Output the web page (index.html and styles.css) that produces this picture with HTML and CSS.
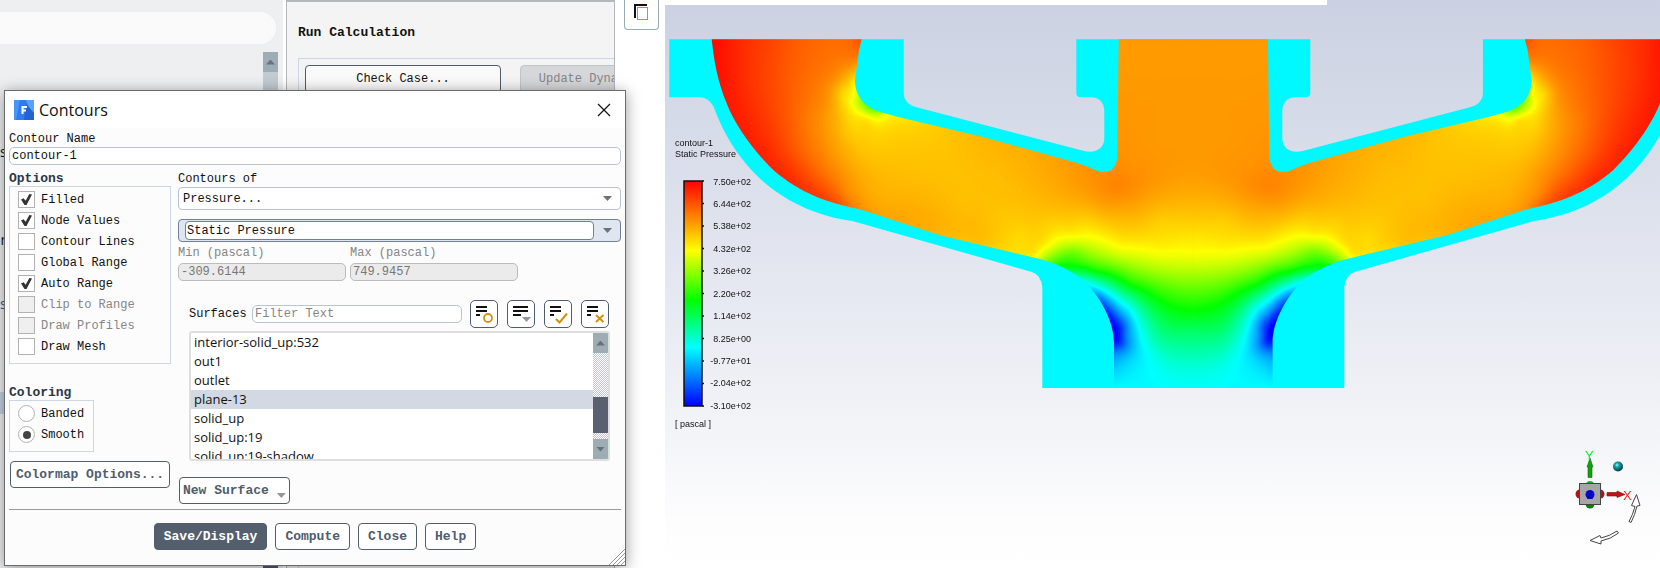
FILE: index.html
```
<!DOCTYPE html>
<html lang="en">
<head>
<meta charset="utf-8">
<title>Contours</title>
<link rel="stylesheet" href="styles.css">
</head>
<body>
<div class="app">
  <aside class="outline">
    <div class="outline-search"></div>
    <div class="outline-scroll">
      <div class="scroll-button"><span class="arrow-up"></span></div>
      <div class="outline-thumb"></div>
    </div>
    <div class="outline-items">
      <span class="outline-item">s</span>
      <span class="outline-item outline-item-clipped">or</span>
      <span class="outline-item">s</span>
      <span class="outline-item outline-item-selected"></span>
    </div>
  </aside>

  <section class="task">
    <h2 class="task-title">Run Calculation</h2>
    <div class="task-group">
      <button class="task-button" type="button">Check Case...</button>
      <button class="task-button task-button-clipped" type="button" disabled>Update Dynamic Mesh...</button>
    </div>
  </section>

  <main class="graphics">
    <div class="side-tools">
      <button class="copy-button" type="button" aria-label="Copy view">
        <svg width="15" height="17" viewBox="0 0 15 17"><path d="M1 14V1h12" fill="none" stroke="#111" stroke-width="2"/><rect x="3.5" y="3.5" width="10" height="12" fill="#fff" stroke="#d0920f"/></svg>
      </button>
    </div>
    <div class="viewport">
      <div class="viewport-strip"></div>
      <canvas class="plot" id="plot" width="995" height="560"></canvas>
      <svg class="plot" viewBox="665 0 995 560">
        <defs>
          <linearGradient id="rainbow" x1="0" y1="0" x2="0" y2="1">
            <stop offset="0" stop-color="#f00"/><stop offset=".31" stop-color="#ff0"/>
            <stop offset=".53" stop-color="#0f0"/><stop offset=".74" stop-color="#0ff"/>
            <stop offset="1" stop-color="#00f"/>
          </linearGradient>
          <radialGradient id="ball" cx=".4" cy=".35" r=".6">
            <stop offset="0" stop-color="#8ff"/><stop offset=".35" stop-color="#1aa3a3"/><stop offset="1" stop-color="#045"/>
          </radialGradient>
        </defs>
        <g class="legend">
          <text x="675" y="146">contour-1</text>
          <text x="675" y="157">Static Pressure</text>
          <rect x="684" y="181" width="18" height="225" fill="url(#rainbow)" stroke="#111" stroke-width="1.5"/>
          <path d="M702 181h2M702 203.500h2M702 226h2M702 248.500h2M702 271h2M702 293.500h2M702 316h2M702 338.500h2M702 361h2M702 383.500h2M702 406h2" stroke="#111" stroke-width="1.5"/>
          <g text-anchor="end">
            <text x="751" y="185">7.50e+02</text><text x="751" y="207">6.44e+02</text>
            <text x="751" y="229">5.38e+02</text><text x="751" y="252">4.32e+02</text>
            <text x="751" y="274">3.26e+02</text><text x="751" y="297">2.20e+02</text>
            <text x="751" y="319">1.14e+02</text><text x="751" y="342">8.25e+00</text>
            <text x="751" y="364">-9.77e+01</text><text x="751" y="386">-2.04e+02</text>
            <text x="751" y="409">-3.10e+02</text>
          </g>
          <text x="675" y="427">[ pascal ]</text>
        </g>
        <g class="triad">
          <circle cx="1590" cy="485" r="4" fill="#1fae1f"/><circle cx="1590" cy="504" r="4.500" fill="#0c7c0c"/>
          <circle cx="1580" cy="494" r="4.500" fill="#b01515"/><circle cx="1600" cy="494" r="4.500" fill="#b01515"/>
          <rect x="1579.500" y="483.500" width="21" height="21" fill="#a6a6a6" stroke="#444"/>
          <path d="M1588 477.500V467h-1l3-9 3 9h-1v10.500z" fill="#12a012" stroke="#0a6b0a" stroke-width=".6"/>
          <path d="M1607 492.500h10v-1.500l8 3.500-8 3v-1.500h-10z" fill="#c01414" stroke="#7d0a0a" stroke-width=".6"/>
          <circle cx="1590" cy="494.500" r="4.500" fill="#0505d8"/>
          <text x="1585" y="460" class="axis axis-y">Y</text>
          <text x="1623" y="500" class="axis axis-x">X</text>
          <text x="1587" y="499" class="axis axis-z">Z</text>
          <circle cx="1618" cy="466.500" r="5" fill="url(#ball)"/>
          <g fill="#fff" stroke="#444">
            <path d="M1629 521.500q4-7 6-15l-3.500-1 5-11 3.500 11-3 .5q-2 9-6 16.500z"/>
            <path d="M1617 531q-7 5-16 7l-1-2.500-10 5 11 3.500v-3q10-2 17.500-8z"/>
          </g>
        </g>
      </svg>
    </div>
    <div class="view-tools">
      <i class="tool tool-active"></i><i class="tool"></i><i class="tool"></i><i class="tool"></i><i class="tool tool-last"></i>
      <i class="tool"></i><i class="tool"></i><i class="tool"></i><i class="tool tool-last"></i>
      <i class="tool tool-active"></i><i class="tool tool-last"></i><i class="tool tool-last"></i><i class="tool tool-last"></i><i class="tool tool-last"></i><i class="tool tool-last"></i>
      <i class="tool tool-active"></i><i class="tool tool-after"></i>
    </div>
  </main>

  <form class="dialog" role="dialog" aria-labelledby="dialog-title">
    <header class="titlebar">
      <svg width="20" height="20" viewBox="0 0 20 20" aria-hidden="true"><path d="M0 0h20v20H0z" fill="#2f7cf0"/><path d="M0 0h6L2 20H0z" fill="#4a93f7"/><path d="M12 0h8v20z" fill="#55a2f8"/><path d="M12 4l8 9v7H10z" fill="#2263d0"/><path d="M8.500 14V7H13M8.500 10.500h3.500" fill="none" stroke="#fff" stroke-width="2"/></svg>
      <h1 class="dialog-title" id="dialog-title">Contours</h1>
      <button class="close" type="button" aria-label="Close window"><svg width="14" height="14" viewBox="0 0 14 14"><path d="M1 1l12 12M13 1L1 13" stroke="#111" stroke-width="1.200"/></svg></button>
    </header>
    <div class="content">
      <label class="label" for="name">Contour Name</label>
      <input class="field" id="name" type="text" value="contour-1">
      <div class="columns">
        <div class="left">
          <div class="heading" id="options-title">Options</div>
          <div class="group" role="group" aria-labelledby="options-title">
            <label class="choice"><input type="checkbox" checked>Filled</label>
            <label class="choice"><input type="checkbox" checked>Node Values</label>
            <label class="choice"><input type="checkbox">Contour Lines</label>
            <label class="choice"><input type="checkbox">Global Range</label>
            <label class="choice"><input type="checkbox" checked>Auto Range</label>
            <label class="choice choice-off"><input type="checkbox" disabled>Clip to Range</label>
            <label class="choice choice-off"><input type="checkbox" disabled>Draw Profiles</label>
            <label class="choice"><input type="checkbox">Draw Mesh</label>
          </div>
          <div class="heading heading-coloring" id="coloring-title">Coloring</div>
          <div class="group group-coloring" role="radiogroup" aria-labelledby="coloring-title">
            <label class="choice"><input type="radio" name="coloring">Banded</label>
            <label class="choice"><input type="radio" name="coloring" checked>Smooth</label>
          </div>
          <button class="button button-colormap" type="button">Colormap Options...</button>
        </div>
        <div class="right">
          <label class="label" for="quantity">Contours of</label>
          <div class="combo"><select id="quantity"><option>Pressure...</option></select><span class="arrow-down"></span></div>
          <div class="combo combo-focus"><select aria-label="Component"><option>Static Pressure</option></select><span class="arrow-down"></span></div>
          <div class="limits">
            <div class="limit"><label class="label" for="min">Min (pascal)</label><input class="field" id="min" type="text" value="-309.6144" disabled></div>
            <div class="limit"><label class="label" for="max">Max (pascal)</label><input class="field" id="max" type="text" value="749.9457" disabled></div>
          </div>
          <div class="surfaces">
            <div class="surface-tools">
              <label for="filter">Surfaces</label>
              <input class="field field-filter" id="filter" type="text" placeholder="Filter Text">
              <button class="icon-button" type="button" aria-label="Match"><svg width="26" height="26" viewBox="0 0 26 26"><path d="M5 6h11M5 10h11M5 14h4" stroke="#111" stroke-width="2"/><circle cx="17" cy="17" r="4" fill="none" stroke="#d0920f" stroke-width="1.800"/></svg></button>
              <button class="icon-button" type="button" aria-label="Group"><svg width="26" height="26" viewBox="0 0 26 26"><path d="M5 6h15M5 10h15M5 14h8" stroke="#111" stroke-width="2"/><path d="M14 16h9l-4.500 5z" fill="#9298a2"/></svg></button>
              <button class="icon-button" type="button" aria-label="Select all"><svg width="26" height="26" viewBox="0 0 26 26"><path d="M5 6h11M5 10h11M5 14h4" stroke="#111" stroke-width="2"/><path d="M11 18l3.500 3.500 7.500-9" fill="none" stroke="#d0920f" stroke-width="2"/></svg></button>
              <button class="icon-button" type="button" aria-label="Deselect all"><svg width="26" height="26" viewBox="0 0 26 26"><path d="M5 6h11M5 10h11M5 14h4" stroke="#111" stroke-width="2"/><path d="M14 14l7.500 7M21.500 14L14 21" fill="none" stroke="#d0920f" stroke-width="2"/></svg></button>
            </div>
            <div class="list">
              <ul class="list-items" role="listbox" aria-label="Surfaces">
                <li role="option">interior-solid_up:532</li>
                <li role="option">out1</li>
                <li role="option">outlet</li>
                <li role="option" aria-selected="true" class="selected">plane-13</li>
                <li role="option">solid_up</li>
                <li role="option">solid_up:19</li>
                <li role="option">solid_up:19-shadow</li>
              </ul>
              <div class="list-scroll">
                <div class="scroll-button"><span class="arrow-up"></span></div>
                <div class="list-track"><div class="list-thumb"></div></div>
                <div class="scroll-button"><span class="arrow-down"></span></div>
              </div>
            </div>
          </div>
          <button class="button button-surface" type="button">New Surface<span class="arrow-down"></span></button>
        </div>
      </div>
      <footer class="actions">
        <button class="button button-primary" type="submit">Save/Display</button>
        <button class="button" type="button">Compute</button>
        <button class="button" type="button">Close</button>
        <button class="button" type="button">Help</button>
      </footer>
    </div>
    <svg class="grip" width="16" height="16" viewBox="0 0 16 16" aria-hidden="true"><path d="M0 16L16 0M4 16L16 4M8 16l8-8M12 16l4-4" stroke="#999"/></svg>
  </form>
</div>
<script src="plot.js"></script>
</body>
</html>
```
FILE: styles.css
```
* { box-sizing: border-box; }
body { margin: 0; background: #fff; }
body, button, input, select { font: 12px/16px "Liberation Mono", monospace; color: #111; }
button, input, select { margin: 0; }

.app { position: relative; display: grid; grid-template-columns: 283px 329px 1fr; column-gap: 3px; min-height: 100vh; overflow: hidden; }

/* outline tree */
.outline { position: relative; background: #edeff1; padding-top: 12px; }
.outline-search { height: 32px; margin-right: 7px; background: #fafafa; border-radius: 0 16px 16px 0; }
.outline-scroll { position: absolute; top: 52px; right: 5px; bottom: 0; width: 15px; display: flex; flex-direction: column; background: #c2cbd2; }
.outline-thumb { margin-top: auto; height: 20px; background: #4f5767; }
.outline-items { display: grid; grid-auto-rows: 22px; row-gap: 66px; margin-top: 97px; width: 20px; font: 14px/22px "Open Sans", sans-serif; }
.outline-items .outline-item:nth-child(3) { margin-top: -24px; color: #1559a8; }
.outline-item-clipped { text-indent: -8px; }
.outline-item-selected { background: #c3d1e0; height: 22px; margin-top: -13px; }
.scroll-button { display: flex; flex: none; align-items: center; justify-content: center; height: 20px; background: #9dadb5; }
.arrow-up, .arrow-down { flex: none; width: 9px; height: 5px; background: #687180; }
.arrow-up { clip-path: polygon(50% 0, 100% 100%, 0 100%); }
.arrow-down { clip-path: polygon(0 0, 100% 0, 50% 100%); }

/* task page */
.task { border: 1px solid #b5b8bb; border-top-width: 2px; background: #f4f4f4; padding-left: 11px; overflow: hidden; }
.task-title { margin: 22px 0 16px; font: bold 13px/18px "Liberation Mono", monospace; }
.task-group { display: flex; gap: 19px; border: 1px solid #cdd5e5; border-right: 0; padding: 6px 0 0 6px; height: 520px; }
.task-button { flex: none; width: 196px; height: 28px; border: 1px solid #4f5b6b; border-radius: 4px; background: #fafafa; }
.task-button-clipped { border-color: #c4c4c6; background: #d6d7da; color: #858585; }

/* graphics window */
.graphics { display: grid; grid-template: 1fr auto / 47px 1fr; min-width: 0; }
.side-tools { padding-left: 6px; }
.copy-button { width: 35px; height: 30px; display: flex; justify-content: center; align-items: center; padding: 0 0 5px; border: 1px solid #9aaab8; border-top: 0; border-radius: 0 0 4px 4px; background: #fff; }
.viewport { position: relative; display: grid; align-items: start; min-width: 0; background: linear-gradient(#cbd1e2, #e5e8f1 50%, #f4f5f8 77%, #fdfdfe 91%, #fff); }
.viewport-strip { position: absolute; top: 0; left: 0; width: 67%; height: 5px; max-width: 662px; background: #fff; }
.plot { grid-area: 1 / 1; display: block; width: 100%; height: auto; }
.legend { font: 9px "Liberation Sans", sans-serif; fill: #111; }
.axis { font: 13px "Liberation Sans", sans-serif; }
.axis-x { fill: #f22; }
.axis-y { fill: #1e2; }
.axis-z { fill: #00a; font-size: 10px; }
.view-tools { grid-column: 1 / -1; display: flex; align-items: flex-end; gap: 8px; height: 5px; padding-left: 17px; }
.tool { width: 32px; height: 2px; border-radius: 2px 2px 0 0; background: #9baab4; }
.tool-active { width: 39px; height: 3px; }
.tool-last { margin-right: 18px; }
.tool-after { margin-left: 18px; }

/* dialog window */
.dialog { position: absolute; top: 90px; left: 4px; width: 622px; border: 1px solid #6b6b6b; background: #fcfcfc; box-shadow: 0 2px 14px rgba(0, 0, 0, .4); }
.titlebar { display: flex; align-items: center; gap: 5px; height: 37px; padding: 0 14px 0 9px; background: #fff; }
.dialog-title { margin: 0; font: 16px/20px "Open Sans", sans-serif; }
.close { display: flex; margin-left: auto; padding: 0; border: 0; background: none; }
.content { padding: 3px 4px 15px; }
.label { display: block; height: 16px; white-space: nowrap; }
.field { display: block; width: 100%; height: 18px; padding: 0 2px; border: 1px solid #b8c4d3; border-radius: 5px; background: #fff; }
.field::placeholder { color: #858585; opacity: 1; }
.field:disabled { border-color: #bcbcbc; background: #ebebeb; color: #777; }
.columns { display: grid; grid-template-columns: 162px 1fr; column-gap: 7px; padding: 5px 0 5px; border-bottom: 1px solid #999; }
.left, .right { min-width: 0; display: flex; flex-direction: column; }
.heading { height: 16px; font: bold 13px/18px "Liberation Mono", monospace; color: #2c3645; }
.heading-coloring { margin-top: 20px; }
.group { height: 178px; border: 1px solid #cdd5e3; padding: 2px 0 0 8px; }
.group-coloring { width: 85px; height: 52px; }
.choice { display: flex; align-items: center; gap: 6px; height: 21px; white-space: nowrap; }
.choice-off { color: #858585; }
.choice input { appearance: none; flex: none; display: grid; place-items: center; width: 17px; height: 17px; border: 1px solid #b2b2b2; background: #fff; }
.choice input:disabled { background: #efefef; }
.choice input[type="radio"] { border-radius: 50%; }
.choice input[type="checkbox"]:checked::before { content: ""; width: 11px; height: 11px; background: #333; clip-path: polygon(0 50%, 24% 38%, 42% 62%, 76% 0, 100% 4%, 50% 100%, 32% 100%); }
.choice input[type="radio"]:checked::before { content: ""; width: 8px; height: 8px; border-radius: 50%; background: #444; }
.button { height: 27px; padding: 0 9px; border: 1px solid #4f5d6d; border-radius: 4px; background: #fff; color: #4f5d6d; font-weight: bold; font-size: 13px; white-space: nowrap; }
.button-colormap { width: 160px; margin: 9px 0 0 1px; padding: 0; }
.button-primary { background: #535f6d; color: #fff; }
.combo { position: relative; display: flex; align-items: center; height: 23px; margin-bottom: 9px; padding-right: 8px; border: 1px solid #b8c4d3; border-radius: 4px; background: #fff; }
.right > .label { height: 17px; line-height: 18px; }
.combo select { appearance: none; flex: 1; height: 19px; padding: 0 4px; border: 0; background: none; outline: 0; }
.combo-focus { margin-bottom: 3px; padding-left: 6px; border-color: #718096; background: #dfe6ef; }
.combo-focus select { margin-right: 9px; padding: 0 1px; border: 1px solid #718096; border-radius: 4px; background: #fff; }
.limits { display: flex; gap: 4px; color: #858585; }
.limit { width: 168px; }
.limit .label { height: 18px; }
.surfaces { margin: 19px 11px 16px 11px; }
.surface-tools { display: flex; align-items: center; gap: 9px; margin-bottom: 3px; padding-right: 1px; }
.surface-tools label { width: 54px; }
.field-filter { flex: 1; min-width: 0; margin-right: -1px; }
.icon-button { width: 28px; height: 28px; padding: 0; border: 1px solid #4f5d6d; border-radius: 5px; background: #fff; }
.icon-button svg { display: block; }
.list { display: flex; height: 130px; border: 2px solid #dedede; border-radius: 3px; background: #fff; overflow: hidden; }
.list-items { flex: 1; margin: 0; padding: 0; list-style: none; overflow: hidden; font: 13px/19px "Open Sans", sans-serif; }
.list-items li { padding-left: 3px; height: 19px; }
.selected { background: #d2d9e3; }
.list-scroll { display: flex; flex-direction: column; width: 15px; }
.list-track { flex: 1; display: flex; flex-direction: column; justify-content: flex-end; padding-bottom: 6px; background: repeating-conic-gradient(#bcc7cd 0 25%, #fff 0 50%) 0 0 / 2px 2px; }
.list-thumb { height: 36px; background: #5a6070; }
.button-surface { align-self: flex-start; display: flex; align-items: center; gap: 8px; padding: 0 3px; width: 111px; margin-left: 1px; }
.button-surface .arrow-down { margin-top: 10px; background: #9298a2; }
.actions { display: flex; justify-content: center; gap: 8px; padding-top: 13px; }
.grip { position: absolute; right: 0; bottom: 0; }
```
FILE: plot.js
```
// Static pressure on plane-13. Levels: 0 blue, 1 cyan, 2 green, 3 yellow, 4 red.
const ORIGIN_X = 665;
const AXIS = 1193.3;

const solid = new Path2D(
  "M669.3 39.3H903.7V93Q904 104 916.700 107.300L1084 151C1096 154 1104.300 148 1104.300 138V110Q1103 98 1092 97.200H1080Q1076.300 97 1076.300 93V39.300H1193.500V388H1042.300V287Q1041 275 1032 272L853.300 221.300C775 210 733 160 713.300 106Q708 97.200 700 97.200H669.300Z");
const fluid = new Path2D(
  "M711.700 39.300C714 60 717 80 726.700 103.300C733 120 748 145 773.300 170C800 193 828 203 860 209.300L940 235.300L1040 259C1055 263 1075 271 1088.300 285C1102 301 1114 322 1114 343V388H1193.500V39.300H1118.700L1117.300 158Q1115 172 1104 172Q1099 172 1095 170Q1082 164 1072 161.500L983 137L900 117.500L882 112.500C860 106 855 92 855 80L859 50L861.700 39.300Z");

const samples = [
  712,40,3.97, 722,80,3.92, 735,120,3.9, 760,155,3.88, 790,182,3.85, 820,199,3.78, 840,204,3.66, 862,209,3.43, 880,214,3.36,
  740,40,3.84, 770,40,3.74, 800,40,3.63, 830,40,3.58, 850,40,3.6, 861,40,3.68,
  750,80,3.8, 780,80,3.68, 810,80,3.56, 830,80,3.46, 845,80,3.28, 855,82,3.05, 855,70,3.3, 857,58,3.5, 840,60,3.52,
  853,95,2.98, 858,95,2.75, 862,102,2.55, 872,109,2.45, 846,95,3.1, 852,107,3, 862,112,2.9, 870,116,2.93, 885,115,2.95, 875,122,3.06, 900,121,3.12,
  840,110,3.24, 855,125,3.15, 830,100,3.38, 780,120,3.7, 810,120,3.5, 800,150,3.62, 820,170,3.57, 850,180,3.4, 845,195,3.5, 875,195,3.32,
  835,140,3.35, 860,150,3.24, 880,140,3.19, 920,135,3.2, 920,180,3.26, 960,200,3.25, 900,160,3.24, 950,160,3.24,
  930,229,3.32, 900,220,3.35, 980,243,3.24, 1010,251,3.13, 1035,257,2.98, 1020,240,3.14, 1000,220,3.22,
  980,139,3.28, 1020,150,3.31, 1060,162,3.37, 1000,180,3.26, 1040,190,3.3, 1080,190,3.38, 1085,170,3.42, 1117,185,3.48, 1108,176,3.46, 1104,205,3.37,
  1140,185,3.43, 1130,165,3.43, 1117,215,3.3, 1120,40,3.4, 1120,80,3.4, 1120,120,3.41, 1160,40,3.4, 1160,90,3.4, 1160,140,3.4, 1193,40,3.4, 1193,90,3.4,
  1193,140,3.4, 1160,180,3.4, 1193,180,3.37, 1193,200,3.3, 1193,220,3.2, 1193,236,3.1, 1193,251,3, 1160,251,3, 1120,246,3, 1160,220,3.2, 1085,220,3.18, 1050,225,3.17,
  1095,238,2.98, 1073,236,3, 1047,245,3, 1060,266,2, 1077,266,2, 1093,270,2, 1127,283,2, 1160,300,2, 1193,310,2,
  1073,252,2.45, 1055,254,2.55, 1043,258,2.7, 1110,261,2.55, 1150,275,2.5, 1193,282,2.5,
  1080,276,1.4, 1087,282,1.1, 1103,289,1.05, 1127,307,1, 1140,334,1, 1147,357,1, 1157,381,1, 1193,386,1.03, 1193,330,1.62, 1193,350,1.35, 1193,368,1.14,
  1160,325,1.58, 1160,345,1.3, 1145,310,1.5, 1115,287,1.5,
  1114,334,0, 1112,323,0.02, 1108,314,0.12, 1102,303,0.32, 1096,294,0.6, 1118,330,0.08, 1118,340,0.1, 1122,320,0.45, 1125,335,0.45, 1131,335,0.7,
  1115,348,0.35, 1117,357,0.65, 1116,370,0.83, 1116,386,0.97, 1130,360,0.84, 1132,382,0.97, 1110,303,0.6, 1119,311,0.65
];

const points = [];
for (let i = 0; i < samples.length; i += 3) {
  const [x, y, v] = samples.slice(i, i + 3);
  points.push([x === 1193 ? AXIS : x, y, v]);
  if (x > 1000 && x < 1190) points.push([2 * AXIS - x, y, v]);
}

const kernel = (dx, dy) => Math.sqrt(dx * dx + dy * dy + 49);

// Radial basis weights by Gaussian elimination with pivoting.
function solveWeights(pts) {
  const n = pts.length;
  const m = pts.map((p) => [...pts.map((q) => kernel(p[0] - q[0], p[1] - q[1])), p[2] - 3]);
  for (let c = 0; c < n; c++) {
    let best = c;
    for (let r = c + 1; r < n; r++) if (Math.abs(m[r][c]) > Math.abs(m[best][c])) best = r;
    [m[c], m[best]] = [m[best], m[c]];
    for (let r = c + 1; r < n; r++) {
      const f = m[r][c] / m[c][c];
      for (let k = c; k <= n; k++) m[r][k] -= f * m[c][k];
    }
  }
  const w = new Array(n).fill(0);
  for (let r = n - 1; r >= 0; r--) {
    let s = m[r][n];
    for (let k = r + 1; k < n; k++) s -= m[r][k] * w[k];
    w[r] = s / m[r][r];
  }
  return w;
}

function color(level) {
  const v = Math.max(0, Math.min(4, level));
  if (v < 1) return [0, 255 * v, 255];
  if (v < 2) return [0, 255, 255 * (2 - v)];
  if (v < 3) return [255 * (v - 2), 255, 0];
  return [255, 255 * (4 - v), 0];
}

function drawField() {
  const left = 705, top = 39, width = 489, height = 350;
  const weights = solveWeights(points);
  const layer = document.createElement("canvas");
  layer.width = width;
  layer.height = height;
  const ctx = layer.getContext("2d");
  const image = ctx.createImageData(width, height);
  const bounds = new Path2D();
  bounds.addPath(
    new Path2D("M705 39H866V76L1072 155L1112 155V39H1194V389H1108V330L1040 268L850 216L705 160Z"),
    new DOMMatrix([1, 0, 0, 1, -left, -top]));
  for (let y = 0; y < height; y++) {
    for (let x = 0; x < width; x++) {
      if (!ctx.isPointInPath(bounds, x, y)) continue;
      let v = 3;
      for (let i = 0; i < points.length; i++) v += weights[i] * kernel(x + left - points[i][0], y + top - points[i][1]);
      const [r, g, b] = color(v);
      image.data.set([r, g, b, 255], (y * width + x) * 4);
    }
  }
  ctx.putImageData(image, 0, 0);
  return { layer, left, top };
}

const ctx = document.getElementById("plot").getContext("2d");
const field = drawField();
for (const side of [1, -1]) {
  ctx.save();
  ctx.translate(-ORIGIN_X, 0);
  if (side < 0) {
    ctx.translate(2 * AXIS, 0);
    ctx.scale(-1, 1);
  }
  ctx.fillStyle = "#00f8ff";
  ctx.fill(solid);
  ctx.clip(fluid);
  ctx.drawImage(field.layer, field.left, field.top);
  ctx.restore();
}
```
